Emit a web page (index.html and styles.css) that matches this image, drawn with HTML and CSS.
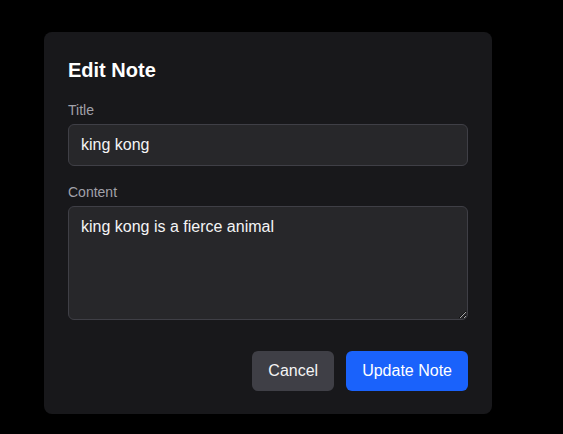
FILE: index.html
```html
<!DOCTYPE html>
<html lang="en">
<head>
<meta charset="utf-8">
<title>Edit Note</title>
<link rel="stylesheet" href="styles.css">
</head>
<body>
<div class="page">
  <form class="modal">
    <h2 class="modal-title">Edit Note</h2>
    <div class="field">
      <label class="label" for="title">Title</label>
      <input class="input" id="title" type="text" value="king kong">
    </div>
    <div class="field">
      <label class="label" for="content">Content</label>
      <textarea class="input textarea" id="content" rows="4">king kong is a fierce animal</textarea>
    </div>
    <div class="actions">
      <button type="button" class="btn btn-cancel">Cancel</button>
      <button type="button" class="btn btn-primary">Update Note</button>
    </div>
  </form>
</div>
</body>
</html>
```
FILE: styles.css
```css
* { box-sizing: border-box; }
html, body {
  margin: 0;
  background: #000;
  font-family: "Liberation Sans", Arial, sans-serif;
  color: #f4f4f5;
}
.page {
  padding: 32px 0 0 44px;
}
.modal {
  width: 448px;
  background: #18181b;
  border-radius: 8px;
  padding: 24px 24px 23px;
  display: flex;
  flex-direction: column;
}
.modal-title {
  margin: 0 0 16px;
  font-size: 20px;
  line-height: 28px;
  font-weight: 700;
  color: #fff;
}
.field {
  display: flex;
  flex-direction: column;
  gap: 4px;
  margin-bottom: 16px;
}
.label {
  font-size: 14px;
  line-height: 20px;
  color: #a1a1aa;
}
.input {
  display: block;
  width: 100%;
  font-family: inherit;
  font-size: 16px;
  line-height: 24px;
  padding: 8px 12px;
  background: #27272a;
  border: 1px solid #3f3f46;
  border-radius: 6px;
  color: #f4f4f5;
  outline: none;
  margin: 0;
}
.textarea {
  height: 114px;
  resize: vertical;
}
.actions {
  display: flex;
  justify-content: flex-end;
  gap: 12px;
  margin-top: 15px;
}
.btn {
  font-family: inherit;
  font-size: 16px;
  line-height: 24px;
  padding: 8px 16px;
  border: none;
  border-radius: 6px;
  color: #fff;
  cursor: pointer;
}
.btn-cancel { background: #3f3f46; color: #f4f4f5; }
.btn-primary { background: #1a62fb; }
```
